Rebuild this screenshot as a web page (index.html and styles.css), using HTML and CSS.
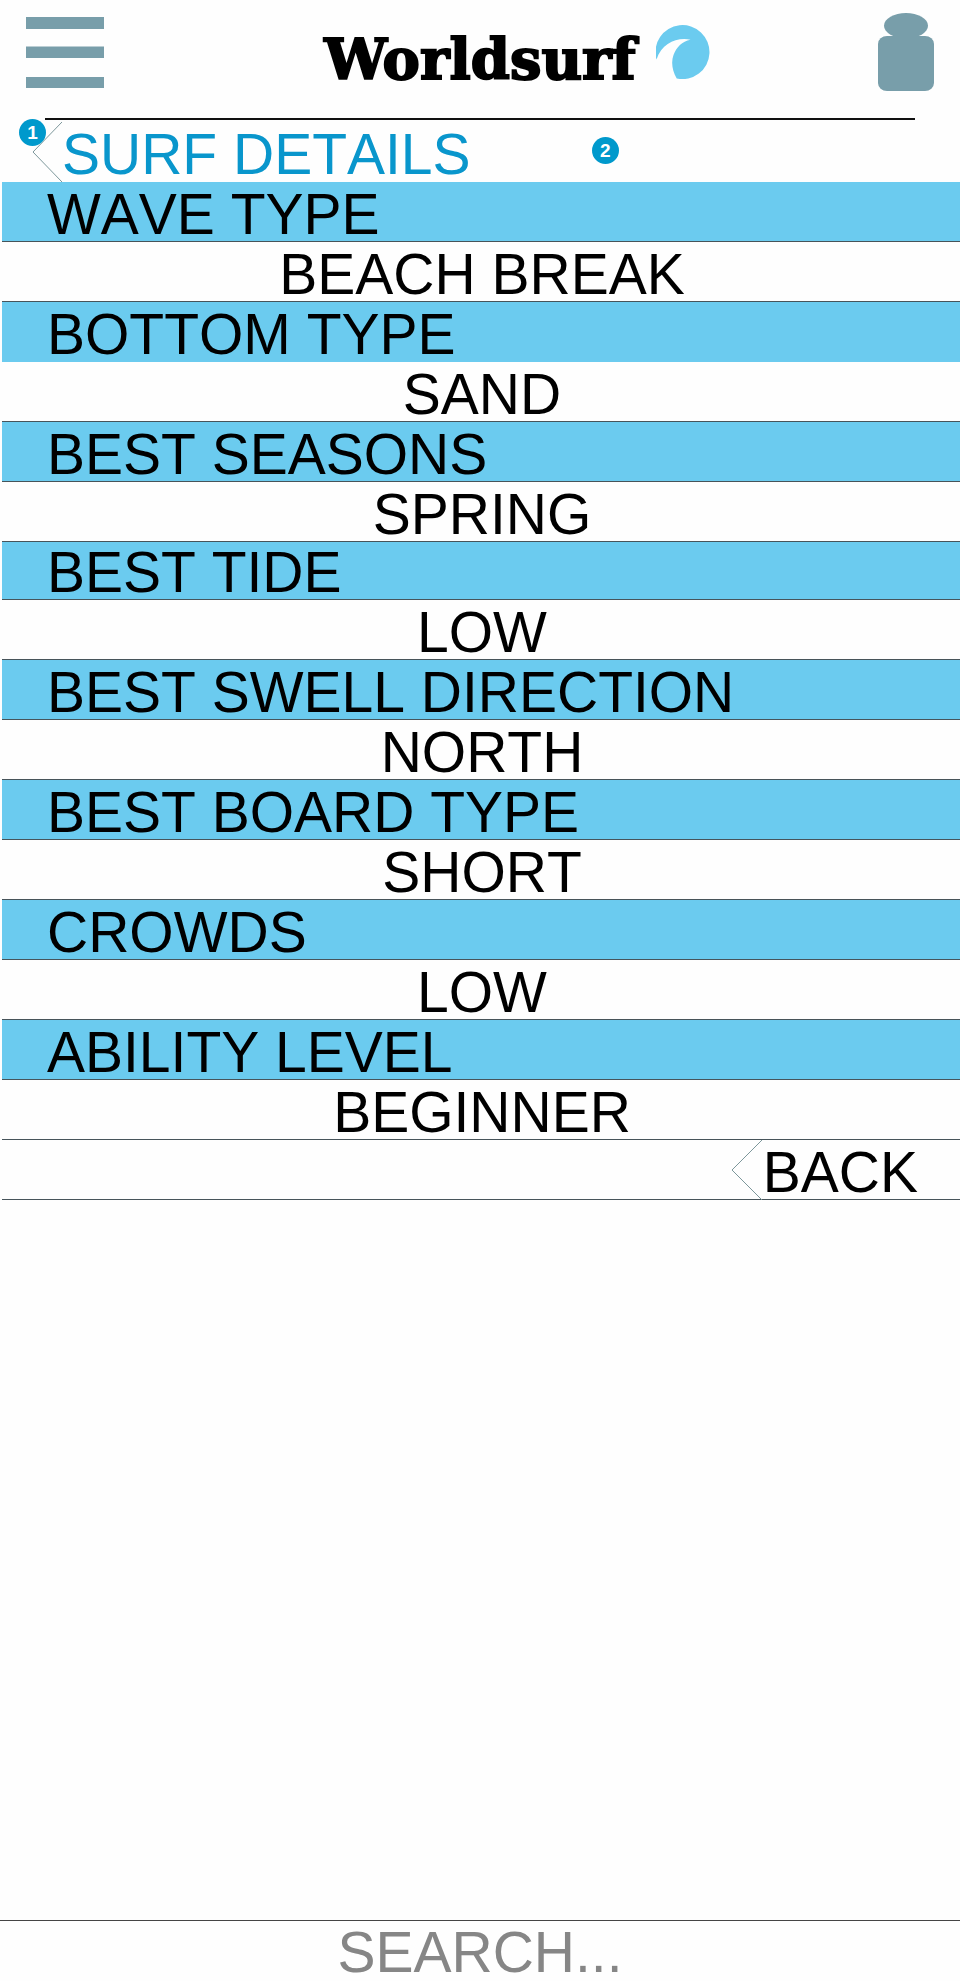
FILE: index.html
```html
<!DOCTYPE html>
<html lang="en">
<head>
<meta charset="utf-8">
<meta name="viewport" content="width=device-width, initial-scale=1">
<title>Worldsurf – Surf details</title>
<link rel="stylesheet" href="styles.css">
</head>
<body class="page">
<header class="header">
  <button class="icon-button" type="button" aria-label="Menu">
    <svg class="icon" width="78" height="71" viewBox="0 0 78 71" aria-hidden="true">
      <path d="M0 0h78v12H0zM0 29.500h78v11.500H0zM0 60h78v11H0z"/>
    </svg>
  </button>
  <a class="brand" href="#">
    <span class="brand-name">Worldsurf</span>
    <svg class="brand-mark" width="54" height="54" viewBox="0 0 54 54" aria-hidden="true">
      <path d="M.5 34.500A27 27 0 1 1 20.700 53.500C16 45 15 37 17.500 30C20.500 22 26 16.500 34.500 14.700C21 12 6 18 .5 34.500Z"/>
    </svg>
  </a>
  <button class="icon-button" type="button" aria-label="Account">
    <svg class="icon" width="56" height="78" viewBox="0 0 56 78" aria-hidden="true">
      <ellipse cx="28" cy="12.700" rx="22" ry="12.700"/>
      <rect y="23" width="56" height="55" rx="9" ry="8"/>
    </svg>
  </button>
</header>
<main class="main">
  <div class="title-bar">
    <a class="title-link" href="#">
      <svg class="chevron" width="30" height="60" viewBox="0 0 30 60" aria-hidden="true"><path d="M30 0L1 30L30 60"/></svg>
      <h1 class="title">SURF DETAILS</h1>
    </a>
    <span class="badge badge-one">1</span>
    <span class="badge badge-two">2</span>
  </div>
  <dl class="details">
    <dt class="row label">WAVE TYPE</dt>
    <dd class="row value">BEACH BREAK</dd>
    <dt class="row label unruled">BOTTOM TYPE</dt>
    <dd class="row value">SAND</dd>
    <dt class="row label">BEST SEASONS</dt>
    <dd class="row value">SPRING</dd>
    <dt class="row label compact">BEST TIDE</dt>
    <dd class="row value">LOW</dd>
    <dt class="row label">BEST SWELL DIRECTION</dt>
    <dd class="row value">NORTH</dd>
    <dt class="row label">BEST BOARD TYPE</dt>
    <dd class="row value">SHORT</dd>
    <dt class="row label">CROWDS</dt>
    <dd class="row value">LOW</dd>
    <dt class="row label">ABILITY LEVEL</dt>
    <dd class="row value">BEGINNER</dd>
  </dl>
  <div class="back-bar">
    <a class="back" href="#">
      <svg class="chevron" width="32" height="60" viewBox="0 0 32 60" aria-hidden="true"><path d="M31 0L1 30L31 60"/></svg>
      <span class="back-text">BACK</span>
    </a>
  </div>
</main>
<footer class="footer">
  <input class="search" type="text" placeholder="SEARCH..." aria-label="Search">
</footer>
</body>
</html>
```
FILE: styles.css
```css
* { box-sizing: border-box; }

.page {
  margin: 0;
  min-height: 100vh;
  display: flex;
  flex-direction: column;
  background: #fefefe;
  color: #000;
  font-family: "Liberation Sans", Arial, sans-serif;
  font-size: 57px;
  font-kerning: none;
  line-height: 53px;
}

a { color: inherit; text-decoration: none; }

.header {
  display: flex;
  align-items: center;
  padding: 13px 26px 27px;
}

.icon-button {
  display: flex;
  padding: 0;
  border: 0;
  background: none;
  cursor: pointer;
}

.icon { fill: #789eaa; }

.brand {
  flex: 1;
  display: flex;
  align-items: center;
  justify-content: center;
  gap: 20px;
  padding-left: 52px;
}

.brand-name {
  padding-top: 14px;
  font: bold 56px/64px "DejaVu Serif", serif;
  -webkit-text-stroke: 2px #000;
}

.brand-mark { fill: #6bcbef; }

.title-bar {
  position: relative;
  padding: 0 45px 0 32px;
}

.title-bar::before {
  content: "";
  display: block;
  height: 2px;
  margin: 0 0 2px 13px;
  background: #111;
}

.title-link { display: flex; color: #0996cc; }

.title {
  margin: 0;
  padding-top: 6px;
  font-size: 57px;
  font-weight: normal;
  line-height: 53px;
}

.badge {
  position: absolute;
  display: flex;
  align-items: center;
  justify-content: center;
  width: 27px;
  height: 27px;
  border-radius: 50%;
  background: #0099cc;
  color: #fff;
  font-size: 19px;
  font-weight: bold;
  line-height: 27px;
}

.badge-one { left: 19px; top: 1px; }
.badge-two { left: 63%; top: 19px; margin-left: -13px; }

.chevron {
  flex: none;
  fill: none;
  stroke: #7d979b;
  stroke-width: 1;
}

.details { margin: 0 0 0 2px; }

.row {
  min-height: 60px;
  margin: 0;
  padding-top: 6px;
  border-bottom: 1px solid #47545a;
}

.label { padding-left: 45px; background: #6bcbef; }
.value { padding-left: 2px; text-align: center; }
.unruled { border-bottom-color: #6bcbef; }
.compact { min-height: 58px; padding-top: 4px; }

.back-bar {
  display: flex;
  justify-content: flex-end;
  margin-left: 2px;
  padding-right: 42px;
  border-bottom: 1px solid #47545a;
}

.back { display: flex; height: 59px; }
.back-text { padding-top: 6px; }

.footer {
  margin-top: auto;
  border-top: 1px solid #444;
}

.search {
  display: block;
  width: 100%;
  height: 60px;
  padding: 2px 0 0;
  border: 0;
  background: none;
  color: #333;
  font: inherit;
  text-align: center;
}

.search::placeholder { color: #868686; opacity: 1; }
```
